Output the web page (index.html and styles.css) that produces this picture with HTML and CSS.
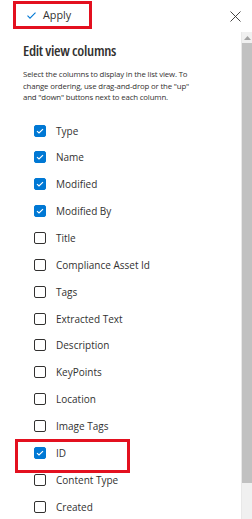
FILE: index.html
```html
<!DOCTYPE html>
<html lang="en">

<head>
  <meta charset="UTF-8" />
  <meta name="viewport" content="width=device-width, initial-scale=1.0" />
  <title>Edit view columns</title>
  <link rel="stylesheet" href="styles.css">
</head>

<body>
  <div class="topbar">
    <button class="apply-btn">
      <svg class="apply-icon" width="9" height="7" viewBox="0 0 9 7">
        <path d="M0.5 3.6 L3 6.1 L8.5 0.6" fill="none" stroke="#0078d4" stroke-width="1.1" />
      </svg>
      <span>Apply</span>
    </button>
    <button class="close-btn" aria-label="Close">
      <svg width="11" height="11" viewBox="0 0 11 11">
        <path d="M0.5 0.5 L10.5 10.5 M10.5 0.5 L0.5 10.5" stroke="#323130" stroke-width="0.9" />
      </svg>
    </button>
  </div>

  <div class="panel">
    <div class="content">
      <h2>Edit view columns</h2>
      <p class="hint">Select the columns to display in the list view. To<br>change ordering, use drag-and-drop or the "up"<br>and "down" buttons next to each column.</p>
      <ul id="columnList" class="columns"></ul>
    </div>
    <div class="scrollbar">
      <div class="scroll-arrow">
        <svg width="7" height="4" viewBox="0 0 7 4"><path d="M0 4 L3.5 0 L7 4 Z" fill="#a3a3a3" /></svg>
      </div>
      <div class="scroll-thumb"></div>
      <div class="scroll-track"></div>
    </div>
  </div>

  <script>
    const columnList = document.getElementById("columnList");

    const columns = [
      { name: "Type", checked: true },
      { name: "Name", checked: true },
      { name: "Modified", checked: true },
      { name: "Modified By", checked: true },
      { name: "Title" },
      { name: "Compliance Asset Id" },
      { name: "Tags" },
      { name: "Extracted Text" },
      { name: "Description" },
      { name: "KeyPoints" },
      { name: "Location" },
      { name: "Image Tags" },
      { name: "ID", checked: true, highlight: true },
      { name: "Content Type" },
      { name: "Created" }
    ];

    const tick = '<svg width="8" height="6" viewBox="0 0 8 6"><path d="M1 3.1 L3 4.9 L7 1.1" fill="none" stroke="#fff" stroke-width="1.2" /></svg>';

    columns.forEach(col => {
      const li = document.createElement("li");
      li.className = "column" + (col.highlight ? " highlight" : "");
      const box = document.createElement("span");
      box.className = "checkbox" + (col.checked ? " checked" : "");
      if (col.checked) box.innerHTML = tick;
      const label = document.createElement("span");
      label.className = "label";
      label.textContent = col.name;
      li.appendChild(box);
      li.appendChild(label);
      columnList.appendChild(li);
    });
  </script>
</body>

</html>
```

FILE: styles.css
```css
:root {
  --primary-color: #0078d4;
  --text-main: #323130;
  --outline-red: #e3101f;
  --scroll-bg: #f0f0f0;
  --scroll-thumb: #c1c1c1;
}

* {
  box-sizing: border-box;
}

body {
  margin: 0;
  width: 252px;
  height: 519px;
  overflow: hidden;
  background: #fff;
  color: var(--text-main);
  font-family: "Segoe UI", "Open Sans", "Noto Sans", sans-serif;
}

.topbar {
  height: 32px;
  display: flex;
  align-items: flex-start;
  justify-content: space-between;
  padding: 1px 11px 0 13px;
}

.apply-btn {
  width: 79px;
  height: 28px;
  border: 3px solid var(--outline-red);
  background: #fff;
  display: flex;
  align-items: center;
  gap: 7px;
  padding: 0 0 1px 11px;
  font-family: inherit;
  font-size: 10.8px;
  color: var(--text-main);
}

.apply-icon {
  margin-top: 1px;
}

.close-btn {
  border: none;
  background: none;
  padding: 0;
  margin-top: 10px;
  display: flex;
}

.panel {
  display: flex;
  height: 487px;
}

.content {
  flex: 1;
  padding: 9px 0 0 23px;
}

h2 {
  margin: 0 0 10px;
  font-size: 15px;
  font-weight: 600;
  line-height: 18px;
  font-stretch: 85%;
  letter-spacing: -0.3px;
}

.hint {
  margin: 0 0 13px;
  font-size: 7.8px;
  line-height: 11.7px;
  letter-spacing: -0.15px;
  white-space: nowrap;
}

.columns {
  list-style: none;
  margin: 0;
  padding: 0;
}

.column {
  height: 26.86px;
  display: flex;
  align-items: center;
  gap: 10px;
  padding-left: 11px;
  font-size: 10px;
  position: relative;
}

.column.highlight::after {
  content: "";
  position: absolute;
  left: -8px;
  top: 0;
  width: 109px;
  height: 28px;
  border: 3px solid var(--outline-red);
}

.checkbox {
  width: 12px;
  height: 12px;
  border: 1px solid var(--text-main);
  border-radius: 2px;
  background: #fff;
  display: flex;
  align-items: center;
  justify-content: center;
  flex-shrink: 0;
}

.checkbox.checked {
  background: var(--primary-color);
  border-color: var(--primary-color);
}

.scrollbar {
  width: 11px;
  display: flex;
  flex-direction: column;
  background: var(--scroll-bg);
  border-left: 1px solid #e8e8e8;
}

.scroll-arrow {
  height: 11px;
  display: flex;
  align-items: center;
  justify-content: center;
}

.scroll-thumb {
  height: 440px;
  background: var(--scroll-thumb);
}

.scroll-track {
  flex: 1;
}
```
